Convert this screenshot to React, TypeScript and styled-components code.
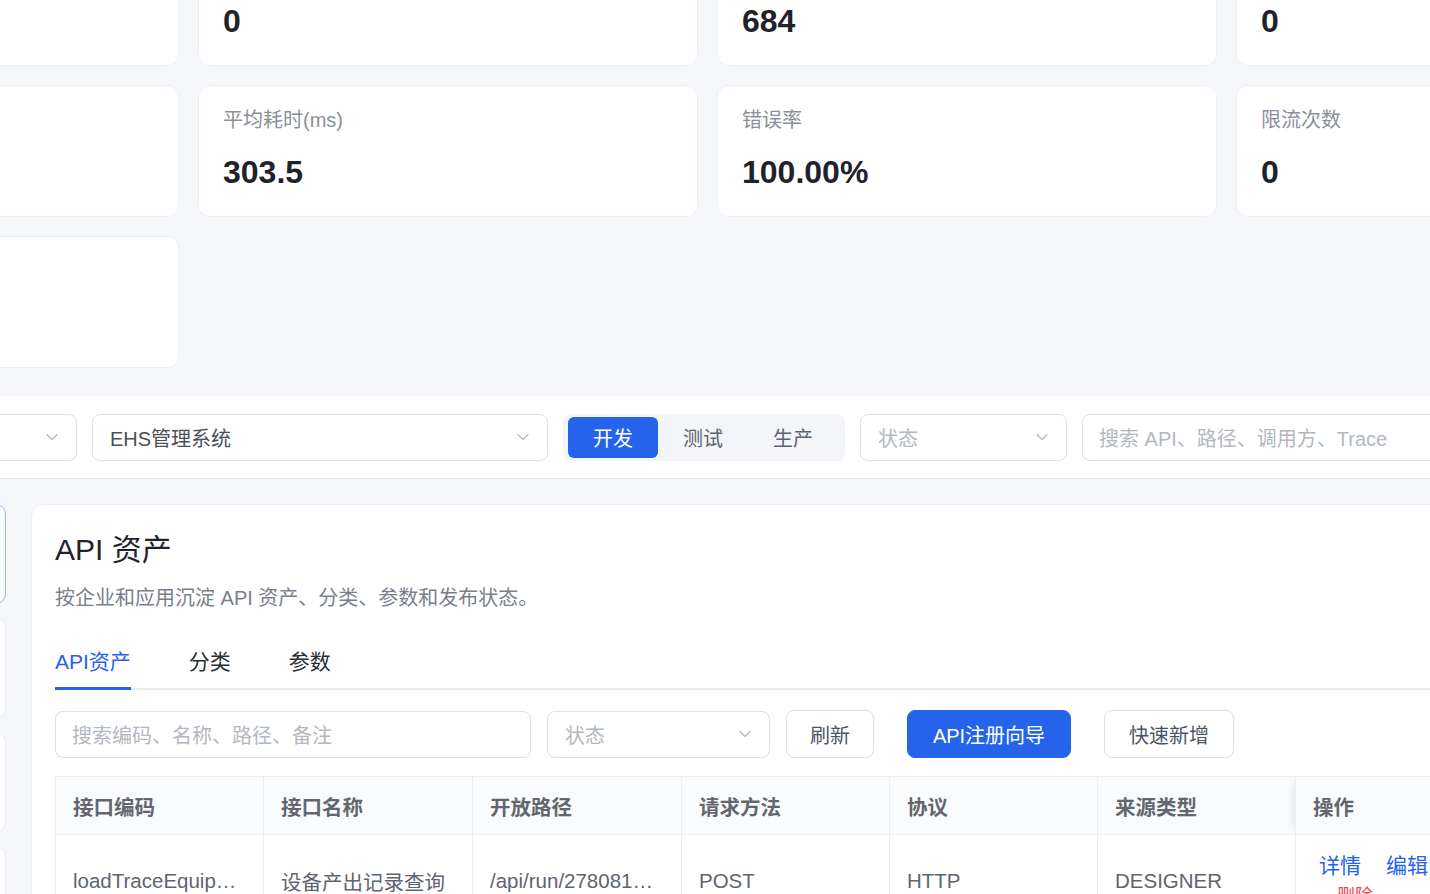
import React from "react";
import styled, { createGlobalStyle } from "styled-components";
import { ChevronDown } from "lucide-react";

const GlobalStyle = createGlobalStyle`
  html, body {
    margin: 0;
    padding: 0;
    background: #f5f7fa;
    overflow: hidden;
  }
  body {
    font-family: "Liberation Sans", "Noto Sans CJK SC", sans-serif;
    color: #1f2329;
  }
  * { box-sizing: border-box; }
`;

const BLUE = "#2563eb";

const Page = styled.div`
  width: 1430px;
  height: 894px;
  overflow: hidden;
  background: #f5f7fa;
`;

/* ---------- metric cards ---------- */

const StatGrid = styled.section`
  display: grid;
  grid-template-columns: repeat(4, 500px);
  grid-auto-rows: 132px;
  gap: 19px;
  margin: -66px 0 0 -321px;
  padding-bottom: 28px;
`;

const StatCard = styled.div`
  background: #fff;
  border: 1px solid #eceff4;
  border-radius: 12px;
  padding: 23px 24px 0;
`;

const StatLabel = styled.div`
  font-size: 20px;
  line-height: 22px;
  color: #8a9099;
`;

const StatValue = styled.div`
  margin-top: 21px;
  font-size: 32px;
  line-height: 40px;
  font-weight: 700;
  color: #1f2329;
`;

/* ---------- filter bar ---------- */

const FilterBar = styled.div`
  display: flex;
  align-items: center;
  gap: 15px;
  height: 83px;
  background: #fff;
  border-bottom: 1px solid #e6e8ed;
`;

const Select = styled.div<{ $width: number; $offset?: number }>`
  display: flex;
  align-items: center;
  justify-content: space-between;
  flex-shrink: 0;
  width: ${(p) => p.$width}px;
  margin-left: ${(p) => p.$offset ?? 0}px;
  height: 47px;
  padding: 0 14px 0 17px;
  border: 1px solid #dcdfe6;
  border-radius: 8px;
  background: #fff;
  font-size: 20px;
  color: #4b5058;
  svg { color: #b4b8bf; }
`;

const Placeholder = styled.span`
  color: #b3b8c0;
`;

const SearchBox = styled.div<{ $width: number }>`
  display: flex;
  align-items: center;
  flex-shrink: 0;
  width: ${(p) => p.$width}px;
  height: 47px;
  padding: 0 16px;
  border: 1px solid #dcdfe6;
  border-radius: 8px;
  background: #fff;
  font-size: 20px;
  color: #b3b8c0;
  white-space: nowrap;
`;

const Segment = styled.div`
  display: flex;
  align-items: center;
  flex-shrink: 0;
  width: 282px;
  height: 47px;
  padding: 0 5px;
  border-radius: 8px;
  background: #f3f5f8;
`;

const SegItem = styled.div<{ $active?: boolean }>`
  width: 90px;
  height: 41px;
  display: flex;
  align-items: center;
  justify-content: center;
  border-radius: 6px;
  font-size: 20px;
  background: ${(p) => (p.$active ? BLUE : "transparent")};
  color: ${(p) => (p.$active ? "#fff" : "#5c6370")};
`;

/* ---------- workspace ---------- */

const Workspace = styled.div`
  display: flex;
  align-items: flex-start;
  gap: 25px;
  padding-top: 25px;
`;

const SideList = styled.div`
  display: flex;
  flex-direction: column;
  gap: 14px;
  width: 200px;
  margin-left: -194px;
  flex-shrink: 0;
`;

const SideCard = styled.div<{ $active?: boolean }>`
  height: 100px;
  border-radius: 10px;
  background: ${(p) => (p.$active ? "#f8fbff" : "#fff")};
  border: 1px solid ${(p) => (p.$active ? "#9fb9ee" : "#e8ebf0")};
`;

const Panel = styled.div`
  width: 1520px;
  flex-shrink: 0;
  background: #fff;
  border: 1px solid #eceff3;
  border-radius: 12px;
  padding: 25px 23px;
`;

const Title = styled.h1`
  margin: 0;
  font-size: 30px;
  line-height: 40px;
  font-weight: 400;
  color: #1f2329;
`;

const Subtitle = styled.p`
  margin: 14px 0 0;
  font-size: 20px;
  line-height: 28px;
  color: #7a808a;
`;

const Tabs = styled.div`
  display: flex;
  gap: 58px;
  margin-top: 24px;
  border-bottom: 2px solid #e9ebef;
`;

const Tab = styled.div<{ $active?: boolean }>`
  padding: 12px 0 11px;
  margin-bottom: -2px;
  font-size: 21px;
  line-height: 28px;
  color: ${(p) => (p.$active ? BLUE : "#2b2f36")};
  border-bottom: 3px solid ${(p) => (p.$active ? BLUE : "transparent")};
`;

const Toolbar = styled.div`
  display: flex;
  align-items: center;
  gap: 16px;
  margin-top: 20px;
`;

const Actions = styled.div`
  display: flex;
  gap: 33px;
`;

const Button = styled.button<{ $width: number; $primary?: boolean }>`
  width: ${(p) => p.$width}px;
  height: 48px;
  padding: 0;
  border-radius: 8px;
  font-family: inherit;
  font-size: 20px;
  border: 1px solid ${(p) => (p.$primary ? BLUE : "#dcdfe6")};
  background: ${(p) => (p.$primary ? BLUE : "#fff")};
  color: ${(p) => (p.$primary ? "#fff" : "#4e5562")};
`;

const Table = styled.table`
  margin-top: 18px;
  width: 1440px;
  table-layout: fixed;
  border-collapse: collapse;
  border: 1px solid #ebeef5;
`;

const Th = styled.th<{ $fixed?: boolean }>`
  height: 58px;
  padding: 0 17px;
  background: #fafbfc;
  text-align: left;
  font-size: 20.5px;
  font-weight: 700;
  color: #62676f;
  border-right: 1px solid #ebeef5;
  border-bottom: 1px solid #ebeef5;
  box-shadow: ${(p) => (p.$fixed ? "-8px 0 8px -6px rgba(0,0,0,0.12)" : "none")};
`;

const Td = styled.td<{ $fixed?: boolean }>`
  height: 92px;
  padding: 0 17px;
  font-size: 20.5px;
  color: #5f6570;
  white-space: nowrap;
  overflow: hidden;
  text-overflow: ellipsis;
  border-right: 1px solid #ebeef5;
  box-shadow: ${(p) => (p.$fixed ? "-8px 0 8px -6px rgba(0,0,0,0.12)" : "none")};
`;

const LinkList = styled.div`
  display: flex;
  flex-wrap: wrap;
  column-gap: 25px;
  width: 130px;
  padding-left: 6px;
`;

const LinkText = styled.span<{ $danger?: boolean }>`
  font-size: ${(p) => (p.$danger ? 18 : 21)}px;
  line-height: 30px;
  padding-left: ${(p) => (p.$danger ? 18 : 0)}px;
  color: ${(p) => (p.$danger ? "#e5484d" : BLUE)};
`;

const stats = [
  { label: "调用总量", value: "684" },
  { label: "成功次数", value: "0" },
  { label: "失败次数", value: "684" },
  { label: "超时次数", value: "0" },
  { label: "P95耗时(ms)", value: "512" },
  { label: "平均耗时(ms)", value: "303.5" },
  { label: "错误率", value: "100.00%" },
  { label: "限流次数", value: "0" },
  { label: "熔断次数", value: "0" },
];

const columns = [
  { title: "接口编码", width: 208 },
  { title: "接口名称", width: 209 },
  { title: "开放路径", width: 209 },
  { title: "请求方法", width: 208 },
  { title: "协议", width: 208 },
  { title: "来源类型", width: 198 },
  { title: "操作", width: 200 },
];

const rows = [
  [
    "loadTraceEquipmentOutput",
    "设备产出记录查询",
    "/api/run/2780816540213",
    "POST",
    "HTTP",
    "DESIGNER",
  ],
];

export default function App() {
  return (
    <Page>
      <GlobalStyle />
      <StatGrid>
        {stats.map((s) => (
          <StatCard key={s.label}>
            <StatLabel>{s.label}</StatLabel>
            <StatValue>{s.value}</StatValue>
          </StatCard>
        ))}
      </StatGrid>

      <FilterBar>
        <Select $width={200} $offset={-123}>
          <span>示例企业</span>
          <ChevronDown size={20} strokeWidth={1.5} />
        </Select>
        <Select $width={456}>
          <span>EHS管理系统</span>
          <ChevronDown size={20} strokeWidth={1.5} />
        </Select>
        <Segment>
          <SegItem $active>开发</SegItem>
          <SegItem>测试</SegItem>
          <SegItem>生产</SegItem>
        </Segment>
        <Select $width={207}>
          <Placeholder>状态</Placeholder>
          <ChevronDown size={20} strokeWidth={1.5} />
        </Select>
        <SearchBox $width={420}>搜索 API、路径、调用方、Trace</SearchBox>
      </FilterBar>

      <Workspace>
        <SideList>
          <SideCard $active />
          <SideCard />
          <SideCard />
          <SideCard />
        </SideList>

        <Panel>
          <Title>API 资产</Title>
          <Subtitle>按企业和应用沉淀 API 资产、分类、参数和发布状态。</Subtitle>
          <Tabs>
            <Tab $active>API资产</Tab>
            <Tab>分类</Tab>
            <Tab>参数</Tab>
          </Tabs>

          <Toolbar>
            <SearchBox $width={476}>搜索编码、名称、路径、备注</SearchBox>
            <Select $width={223}>
              <Placeholder>状态</Placeholder>
              <ChevronDown size={20} strokeWidth={1.5} />
            </Select>
            <Actions>
              <Button $width={88}>刷新</Button>
              <Button $width={164} $primary>
                API注册向导
              </Button>
              <Button $width={130}>快速新增</Button>
            </Actions>
          </Toolbar>

          <Table>
            <colgroup>
              {columns.map((c) => (
                <col key={c.title} style={{ width: c.width }} />
              ))}
            </colgroup>
            <thead>
              <tr>
                {columns.map((c, i) => (
                  <Th key={c.title} $fixed={i === columns.length - 1}>
                    {c.title}
                  </Th>
                ))}
              </tr>
            </thead>
            <tbody>
              {rows.map((r) => (
                <tr key={r[0]}>
                  {r.map((cell, i) => (
                    <Td key={i}>{cell}</Td>
                  ))}
                  <Td $fixed>
                    <LinkList>
                      <LinkText>详情</LinkText>
                      <LinkText>编辑</LinkText>
                      <LinkText $danger>删除</LinkText>
                    </LinkList>
                  </Td>
                </tr>
              ))}
            </tbody>
          </Table>
        </Panel>
      </Workspace>
    </Page>
  );
}
